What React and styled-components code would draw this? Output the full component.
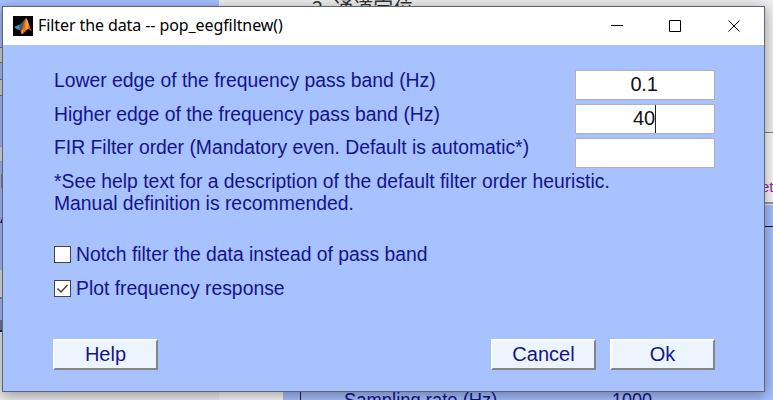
import React from 'react';
import styled, { createGlobalStyle } from 'styled-components';

const Global = createGlobalStyle`
  * { box-sizing: border-box; }
  body { margin: 0; overflow: hidden; }
`;

const Desktop = styled.main`
  position: relative;
  width: 773px;
  height: 400px;
  overflow: hidden;
  background: #f0f0f0;
  font-family: "Liberation Sans", Arial, sans-serif;
`;

const Pane = styled.div`
  position: absolute;
  left: ${(p) => p.$x}px;
  top: ${(p) => p.$y}px;
  width: ${(p) => p.$w}px;
  height: ${(p) => p.$h}px;
  background: ${(p) => p.$fill};
  border-top: ${(p) => p.$top || 'none'};
  border-left: ${(p) => p.$left || 'none'};
  border-bottom: ${(p) => p.$bottom || 'none'};
`;

const DesktopText = styled.span`
  position: absolute;
  left: ${(p) => p.$x}px;
  top: ${(p) => p.$y}px;
  font-family: ${(p) => p.$font || 'inherit'};
  font-size: ${(p) => p.$size}px;
  line-height: 22px;
  color: ${(p) => p.$color};
  white-space: nowrap;
  transform: scaleX(${(p) => p.$stretch || 1});
  transform-origin: left;
`;

const Dialog = styled.section`
  position: absolute;
  left: 2px;
  top: 6px;
  width: 763px;
  height: 386px;
  display: flex;
  flex-direction: column;
  border: 1px solid #5f6673;
  background: #a8c1ff;
  box-shadow: 0 3px 13px 1px rgba(0, 0, 0, 0.36);
`;

const TitleBar = styled.header`
  display: flex;
  align-items: center;
  height: 38px;
  flex: none;
  padding-left: 10px;
  background: #fff;
`;

const Title = styled.h1`
  flex: 1;
  margin: -2px 0 0 5px;
  font: 400 16px/22px "Noto Sans", "Open Sans", sans-serif;
  letter-spacing: -0.09px;
  color: #000;
  white-space: nowrap;
`;

const WindowControls = styled.div`
  display: flex;
  gap: 46px;
  margin-right: 23px;
  svg { display: block; }
`;

const Body = styled.div`
  display: flex;
  flex-direction: column;
  flex: 1;
  padding: 25px 49px 0 51px;
`;

const Copy = styled.span`
  display: block;
  height: 22px;
  font-size: 20px;
  line-height: 22px;
  color: #14148a;
  white-space: nowrap;
  transform: scaleX(0.967);
  transform-origin: left;
`;

const Field = styled.label`
  display: flex;
  justify-content: space-between;
  height: 34px;
  ${Copy} { margin-top: -1px; }
  &:nth-child(3) ${Copy} { margin-top: -2px; }
`;

const ValueBox = styled.span`
  display: flex;
  align-items: center;
  justify-content: center;
  width: 140px;
  height: 30px;
  padding: 0 2px 2px 0;
  border: 1px solid #b2b2b2;
  background: #fff;
  font-size: 20px;
  letter-spacing: -0.2px;
  color: #101020;
`;

const Caret = styled.i`
  width: 1px;
  height: 28px;
  margin: 0 -1px -2px 0;
  background: #222;
`;

const Notes = styled.div`
  margin-top: -2px;
  height: 73px;
`;

const Option = styled.label`
  display: flex;
  align-items: center;
  height: 22px;
  margin-bottom: 12px;
  gap: 5px;
`;

const CheckBox = styled.span`
  display: grid;
  place-items: center;
  width: 17px;
  height: 17px;
  border: 1px solid #444;
  background: #fff;
`;

const Actions = styled.footer`
  display: flex;
  gap: 14px;
  margin: 28px 0 0 -1px;
`;

const Button = styled.button`
  width: 105px;
  height: 31px;
  padding: 0 0 1px;
  border: 2px solid;
  border-color: #fff #858585 #858585 #fff;
  background: #ecf5ff;
  font: 20px/22px "Liberation Sans", Arial, sans-serif;
  color: #14148a;
  &:first-child { margin-right: auto; }
`;

const MatlabIcon = () => (
  <svg width="20" height="20" viewBox="0 0 20 20">
    <defs>
      <linearGradient id="peak" x1="0" x2="1">
        <stop offset="0" stopColor="#7c2615" />
        <stop offset="0.45" stopColor="#ef7a1d" />
        <stop offset="0.62" stopColor="#ffad3c" />
        <stop offset="0.8" stopColor="#d8481b" />
        <stop offset="1" stopColor="#8e2615" />
      </linearGradient>
    </defs>
    <path d="M0 0h20v20H0z" fill="#000" />
    <path d="M1 11L6.5 8.5 9 10 7 14 4.5 13.5z" fill="#3c9bb4" />
    <path d="M6.5 8.5C9 8 10.5 4 13 2L10.5 10 7 14 6 11z" fill="#38606e" />
    <path d="M13 2C15 3 16.500 11 19 15.500L15.500 13C13 13 12 17.500 8.500 18.500L6.800 14C10 12 11.500 5 13 2z" fill="url(#peak)" />
    <path d="M8.500 14.500L11 12l-1 5-1.500 1z" fill="#f2a329" />
  </svg>
);

export default function App() {
  return (
    <>
      <Global />
      <Desktop>
        <Pane $x={0} $y={0} $w={219} $h={332} $fill="#a8c1ff" $bottom="2px solid #252b3d" />
        <Pane $x={0} $y={320} $w={219} $h={10} $fill="#707b9e" />
        <Pane $x={-12} $y={47} $w={18} $h={16} $fill="#d5d9d3" $top="1px solid #777" $bottom="1px solid #777" />
        <Pane $x={-12} $y={79} $w={18} $h={17} $fill="#d5d9d3" $top="1px solid #777" $bottom="1px solid #777" />
        <Pane $x={-12} $y={146} $w={18} $h={16} $fill="#e4e4e4" $top="1px solid #aaa" $bottom="1px solid #aaa" />
        <Pane $x={-12} $y={270} $w={18} $h={29} $fill="#e8e8e8" $bottom="2px solid #888" />
        <DesktopText $x={1} $y={4} $size={20} $color="#14148a">C</DesktopText>
        <DesktopText $x={0} $y={170} $size={20} $color="#14148a">F</DesktopText>
        <DesktopText $x={0} $y={205} $size={20} $color="#14148a">A</DesktopText>
        <Pane $x={219} $y={332} $w={64} $h={68} $fill="#fbfbfb" />
        <Pane $x={700} $y={132} $w={73} $h={72} $fill="#fafafa" $top="1px solid #888" $bottom="2px solid #999" />
        <Pane $x={283} $y={205} $w={490} $h={195} $fill="#a8c1ff" />
        <Pane $x={300} $y={226} $w={473} $h={174} $fill="#a8c1ff" $top="1px solid #111" $left="1px solid #222" />
        <DesktopText $x={312} $y={-3} $size={20} $font={'"Noto Sans CJK SC", sans-serif'} $color="#333">2. 通道定位</DesktopText>
        <DesktopText $x={761} $y={176} $size={15} $color="#9b2f94">et</DesktopText>
        <DesktopText $x={344} $y={389} $size={20} $stretch={0.92} $color="#14148a">Sampling rate (Hz)</DesktopText>
        <DesktopText $x={612} $y={389} $size={20} $stretch={0.9} $color="#14148a">1000</DesktopText>

        <Dialog>
          <TitleBar>
            <MatlabIcon />
            <Title>Filter the data -- pop_eegfiltnew()</Title>
            <WindowControls>
              <svg width="13" height="13"><path d="M1 5.500h12" stroke="#000" /></svg>
              <svg width="13" height="13"><path d="M.5.5h11v11H.5z" fill="none" stroke="#000" /></svg>
              <svg width="13" height="13"><path d="M.5.5l11 11M11.500.5l-11 11" stroke="#000" /></svg>
            </WindowControls>
          </TitleBar>
          <Body>
            <Field>
              <Copy>Lower edge of the frequency pass band (Hz)</Copy>
              <ValueBox>0.1</ValueBox>
            </Field>
            <Field>
              <Copy>Higher edge of the frequency pass band (Hz)</Copy>
              <ValueBox>40<Caret /></ValueBox>
            </Field>
            <Field>
              <Copy>FIR Filter order (Mandatory even. Default is automatic*)</Copy>
              <ValueBox />
            </Field>
            <Notes>
              <Copy>*See help text for a description of the default filter order heuristic.</Copy>
              <Copy>Manual definition is recommended.</Copy>
            </Notes>
            <Option>
              <CheckBox />
              <Copy>Notch filter the data instead of pass band</Copy>
            </Option>
            <Option>
              <CheckBox>
                <svg width="13" height="13"><path d="M1.500 6.500l3.500 3.500 6.500-7" fill="none" stroke="#444" strokeWidth="1.500" /></svg>
              </CheckBox>
              <Copy>Plot frequency response</Copy>
            </Option>
            <Actions>
              <Button>Help</Button>
              <Button>Cancel</Button>
              <Button>Ok</Button>
            </Actions>
          </Body>
        </Dialog>
      </Desktop>
    </>
  );
}
